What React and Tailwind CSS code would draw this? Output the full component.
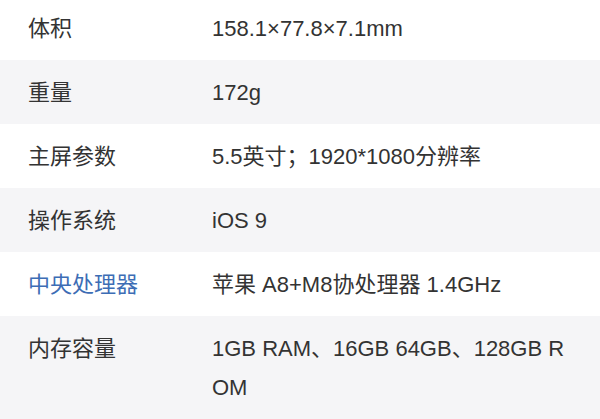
import React from 'react';

const specs = [
  { label: '体积', value: '158.1×77.8×7.1mm' },
  { label: '重量', value: '172g' },
  { label: '主屏参数', value: '5.5英寸；1920*1080分辨率' },
  { label: '操作系统', value: 'iOS 9' },
  { label: '中央处理器', value: '苹果 A8+M8协处理器 1.4GHz', link: true },
  { label: '内存容量', value: '1GB RAM、16GB 64GB、128GB ROM' },
];

const App = () => {
  return (
    <div
      className="w-[600px] h-[419px] overflow-hidden bg-white text-[#333333]"
      style={{ fontFamily: '"Liberation Sans", "Noto Sans CJK SC", sans-serif' }}
    >
      <div className="-mt-1">
        {specs.map((row, i) => (
          <div
            key={row.label}
            className={`flex py-[12.5px] pl-[28px] pr-[25px] text-[22px] leading-[39px] ${
              i % 2 === 1 ? 'bg-[#f5f5f7]' : 'bg-white'
            }`}
          >
            <div className={`w-[184px] shrink-0 ${row.link ? 'text-[#3d6db5]' : ''}`}>
              {row.label}
            </div>
            <div className="flex-1 break-all">{row.value}</div>
          </div>
        ))}
      </div>
    </div>
  );
};

export default App;
